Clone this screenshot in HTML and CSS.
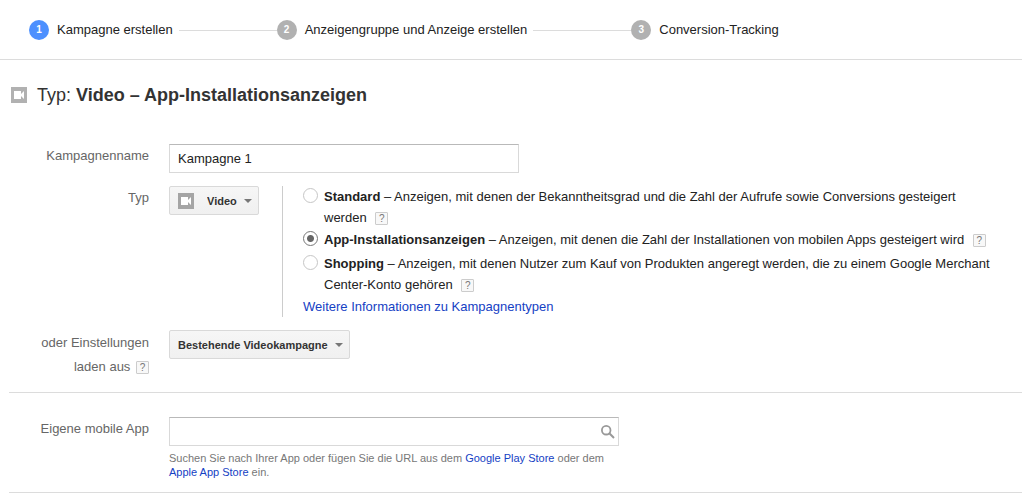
FILE: index.html
```html
<!DOCTYPE html>
<html lang="de">
<head>
<meta charset="utf-8">
<meta name="viewport" content="width=device-width, initial-scale=1">
<title>Kampagne erstellen</title>
<link rel="stylesheet" href="styles.css">
</head>
<body>
<header class="wizard">
  <ol class="steps">
    <li class="step step-current" aria-current="step"><span class="step-number">1</span><span class="step-name">Kampagne erstellen</span></li>
    <li class="step"><span class="step-number">2</span><span class="step-name">Anzeigengruppe und Anzeige erstellen</span></li>
    <li class="step"><span class="step-number">3</span><span class="step-name">Conversion-Tracking</span></li>
  </ol>
</header>
<main>
  <h1 class="title">
    <svg class="video-icon" viewBox="0 0 16 16" aria-hidden="true"><path fill="#b1b1b1" d="M0 0h16v16H0z"/><path fill="#fff" d="M3 4h7v3l3-3v8l-3-3v3H3z"/></svg>
    <span>Typ: <strong>Video – App-Installationsanzeigen</strong></span>
  </h1>
  <form>
    <section class="section">
      <div class="row">
        <label class="label" for="name">Kampagnenname</label>
        <input class="text-box name-box" id="name" type="text" value="Kampagne 1">
      </div>
      <div class="row">
        <label class="label" for="type">Typ</label>
        <div class="type-field">
          <div class="dropdown dropdown-icon">
            <svg class="video-icon" viewBox="0 0 16 16" aria-hidden="true"><path fill="#a5a5a5" d="M0 0h16v16H0z"/><path fill="#fff" d="M3 4h7v3l3-3v8l-3-3v3H3z"/></svg>
            <select id="type"><option>Video</option></select>
          </div>
          <div class="options">
            <div class="option">
              <input type="radio" name="subtype" id="standard">
              <div><label for="standard"><strong>Standard</strong> – Anzeigen, mit denen der Bekanntheitsgrad und die Zahl der Aufrufe sowie Conversions gesteigert werden</label> <button class="help" type="button" aria-label="Hilfe zu Standard">?</button></div>
            </div>
            <div class="option">
              <input type="radio" name="subtype" id="app" checked>
              <div><label for="app"><strong>App-Installationsanzeigen</strong> – Anzeigen, mit denen die Zahl der Installationen von mobilen Apps gesteigert wird</label> <button class="help" type="button" aria-label="Hilfe zu App-Installationsanzeigen">?</button></div>
            </div>
            <div class="option">
              <input type="radio" name="subtype" id="shopping">
              <div><label for="shopping"><strong>Shopping</strong> – Anzeigen, mit denen Nutzer zum Kauf von Produkten angeregt werden, die zu einem Google Merchant Center-Konto gehören</label> <button class="help" type="button" aria-label="Hilfe zu Shopping">?</button></div>
            </div>
            <a href="#">Weitere Informationen zu Kampagnentypen</a>
          </div>
        </div>
      </div>
      <div class="row">
        <div class="label label-tall"><label for="existing">oder Einstellungen laden aus</label> <button class="help help-label" type="button" aria-label="Hilfe zu Einstellungen">?</button></div>
        <div class="dropdown"><select id="existing"><option>Bestehende Videokampagne</option></select></div>
      </div>
    </section>
    <section class="section section-app">
      <div class="row">
        <label class="label" for="mobile-app">Eigene mobile App</label>
        <div class="app-field">
          <div class="search">
            <input class="text-box" id="mobile-app" type="text">
            <svg class="search-icon" viewBox="0 0 14 14" aria-hidden="true"><circle cx="5.2" cy="5.2" r="4.3" fill="none" stroke="#999" stroke-width="1.8"/><path d="M8.3 8.3l4.7 4.7" stroke="#999" stroke-width="2"/></svg>
          </div>
          <p class="hint">Suchen Sie nach Ihrer App oder fügen Sie die URL aus dem <a href="#">Google Play Store</a> oder dem <a href="#">Apple App Store</a> ein.</p>
        </div>
      </div>
    </section>
  </form>
</main>
</body>
</html>
```
FILE: styles.css
```css
* { box-sizing: border-box; }

body {
  margin: 0;
  background: #fff;
  color: #222;
  font: 13px/22px "Liberation Sans", Arial, sans-serif;
}

a { color: #1541c4; text-decoration: none; }
input, select, button { font: inherit; color: inherit; margin: 0; }

.wizard {
  padding: 20px 29px 19px;
  border-bottom: 1px solid #dcdcdc;
}
.steps {
  display: flex;
  margin: 0;
  padding: 0;
  list-style: none;
  line-height: 20px;
}
.step { display: flex; align-items: center; }
.step:not(:last-child)::after {
  content: "";
  width: 98px;
  margin-left: 6px;
  border-top: 1px solid #dcdcdc;
}
.step-number {
  width: 20px;
  height: 20px;
  margin-right: 8px;
  border-radius: 50%;
  background: #b1b1b1;
  color: #fff;
  font-size: 10px;
  font-weight: bold;
  text-align: center;
}
.step-current .step-number { background: #4d90fe; }

.title {
  display: flex;
  align-items: center;
  gap: 10px;
  margin: 0;
  padding: 24px 11px 38px;
  color: #333;
  font-size: 18px;
  font-weight: normal;
  line-height: 22px;
}
.video-icon { flex: none; width: 16px; height: 16px; }

.section {
  display: flex;
  flex-direction: column;
  gap: 13px;
  margin-left: 9px;
  padding-bottom: 13px;
  border-bottom: 1px solid #dcdcdc;
}
.section-app { padding: 24px 0 13px; }

.row {
  display: grid;
  grid-template-columns: 140px minmax(0, 1fr);
  column-gap: 20px;
  align-items: start;
}
.label { padding-top: 1px; color: #666; text-align: right; }
.label-tall { padding-left: 24px; line-height: 24px; }

.text-box {
  width: 100%;
  height: 29px;
  padding: 0 8px;
  border: 1px solid #d9d9d9;
  border-top-color: #b9b9b9;
  background: #fff;
}
.name-box { max-width: 350px; }

.dropdown { position: relative; justify-self: start; flex: none; height: 29px; }
.dropdown select {
  appearance: none;
  height: 29px;
  padding: 0 21px 0 8px;
  border: 1px solid #d9d9d9;
  border-radius: 2px;
  background: linear-gradient(#f6f6f6, #f0f0f0);
  color: #333;
  font-size: 11px;
  font-weight: bold;
}
.dropdown::after {
  content: "";
  position: absolute;
  top: 13px;
  right: 7px;
  border: 4px solid transparent;
  border-top-color: #777;
  border-bottom: 0;
  pointer-events: none;
}
.dropdown-icon select { padding-left: 37px; }
.dropdown-icon .video-icon { position: absolute; top: 7px; left: 9px; pointer-events: none; }

.type-field { display: flex; align-items: flex-start; gap: 23px; }
.options {
  flex: 1;
  display: flex;
  flex-direction: column;
  gap: 1px;
  padding: 0 24px 0 20px;
  border-left: 1px solid #ccc;
  line-height: 21px;
}
.option { display: flex; gap: 6px; }
.option:nth-child(3) { padding-top: 2px; }
.option input {
  appearance: none;
  flex: none;
  width: 15px;
  height: 15px;
  margin-top: 2px;
  border: 1px solid #c6c6c6;
  border-radius: 50%;
}
.option input:checked {
  border-color: #777;
  background: radial-gradient(circle, #666 0 3px, transparent 4px);
}

.help {
  width: 13px;
  height: 13px;
  margin-left: 5px;
  padding: 0;
  border: 1px solid #ccc;
  border-radius: 1px;
  background: #f8f8f8;
  color: #777;
  font-size: 10px;
  line-height: 11px;
  vertical-align: 0;
}
.help-label { margin-left: 2px; }

.app-field { max-width: 450px; }
.search { position: relative; height: 29px; }
.search .text-box { padding-right: 32px; }
.search-icon { position: absolute; top: 8px; right: 4px; width: 14px; height: 14px; }
.hint {
  margin: 5px 0 0;
  color: #777;
  font-size: 11px;
  line-height: 14px;
}
```
